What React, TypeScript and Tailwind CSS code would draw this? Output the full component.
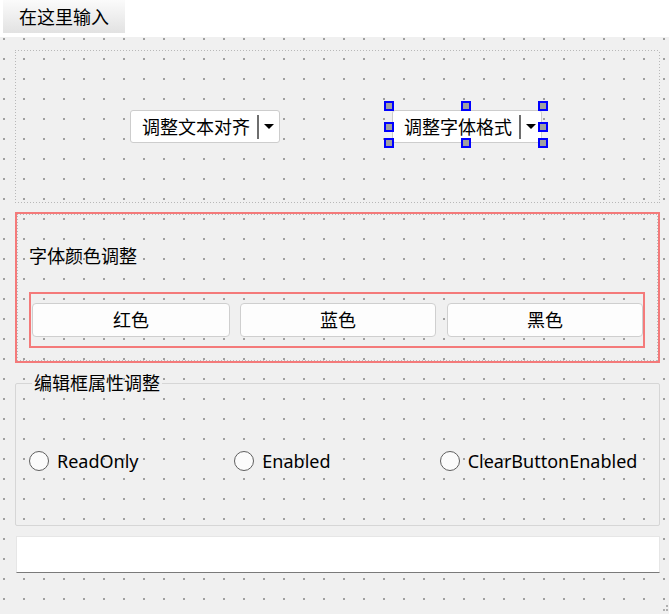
import React from "react";

const dotted =
  "[background-image:repeating-linear-gradient(90deg,#b8b8b8_0_1px,transparent_1px_3px),repeating-linear-gradient(90deg,#b8b8b8_0_1px,transparent_1px_3px),repeating-linear-gradient(0deg,#b8b8b8_0_1px,transparent_1px_3px),repeating-linear-gradient(0deg,#b8b8b8_0_1px,transparent_1px_3px)] [background-size:100%_1px,100%_1px,1px_100%,1px_100%] [background-position:0_0,0_100%,0_0,100%_0] bg-no-repeat";

function Combo({ label }: { label: string }) {
  return (
    <div className="h-[33px] w-[150px] bg-white border border-[#cdcdcd] rounded-[3px] flex items-center">
      <span className="pl-[11px] text-[18px] leading-[24px] whitespace-nowrap">{label}</span>
      <div className="ml-auto mr-[5px] flex items-center">
        <div className="w-[2px] h-[24px] bg-[#6e6e6e]" />
        <svg width="10" height="6" viewBox="0 0 10 6" className="ml-[5px]">
          <polygon points="0,0 10,0 5,5" fill="#000" />
        </svg>
      </div>
    </div>
  );
}

function Handle({ cls }: { cls: string }) {
  return <div className={`absolute w-[10px] h-[10px] bg-[#a0a0a0] border-2 border-[#0000ff] ${cls}`} />;
}

function Btn({ label, w }: { label: string; w: string }) {
  return (
    <div className={`${w} h-[34px] bg-[#fdfdfd] border border-[#cfcfcf] rounded-[4px] flex items-center justify-center text-[18px]`}>
      {label}
    </div>
  );
}

function Radio({ label }: { label: string }) {
  return (
    <div className="flex items-center gap-[8px] h-[24px]">
      <div className="w-[20px] h-[20px] rounded-full border border-[#5f5f5f] bg-[#fbfbfb]" />
      <span className="text-[18px] leading-[24px]">{label}</span>
    </div>
  );
}

export default function App() {
  return (
    <div className="w-[669px] h-[614px] bg-white overflow-hidden relative text-black font-['Noto_Sans','Noto_Sans_CJK_SC',sans-serif]">
      <div className="h-[37px]">
        <div className="ml-[3px] w-[122px] h-[33px] bg-gradient-to-b from-[#fbfbfb] to-[#e2e2e2] flex items-center pl-[16px] text-[18px] leading-[24px]">
          在这里输入
        </div>
      </div>
      <div className="h-[577px] bg-[#f0f0f0] [background-image:linear-gradient(to_bottom,transparent_2px,#f0f0f0_2px),linear-gradient(to_right,#a0a0a0_2px,transparent_2px)] [background-size:20px_20px] [background-position:3px_1px] pt-[13px] pl-[15px]">
        <div className="w-[645px] flex flex-col">
          {/* top layout */}
          <div className={`h-[153px] flex items-center ${dotted}`}>
            <div className="ml-[115px]">
              <Combo label="调整文本对齐" />
            </div>
            <div className="ml-[112px] relative">
              <Combo label="调整字体格式" />
              <Handle cls="left-[-8px] top-[-9px]" />
              <Handle cls="left-[69px] top-[-9px]" />
              <Handle cls="left-[146px] top-[-9px]" />
              <Handle cls="left-[-8px] top-[12px]" />
              <Handle cls="left-[146px] top-[12px]" />
              <Handle cls="left-[-8px] top-[28px]" />
              <Handle cls="left-[69px] top-[28px]" />
              <Handle cls="left-[146px] top-[28px]" />
            </div>
          </div>

          {/* red frame */}
          <div className="mt-[9px] h-[151px] border-2 border-[#f47a7a]">
            <div className={`h-full pl-[12px] ${dotted}`}>
              <div className="pt-[30px] text-[18px] leading-[24px]">字体颜色调整</div>
              <div className="mt-[24px] w-[616px] h-[56px] border-2 border-[#f47a7a] pt-[9px] pl-[1px] flex gap-[10px]">
                <Btn label="红色" w="w-[198px]" />
                <Btn label="蓝色" w="w-[196px]" />
                <div className="ml-[1px]">
                  <Btn label="黑色" w="w-[196px]" />
                </div>
              </div>
            </div>
          </div>

          {/* group box */}
          <fieldset className="mt-[8px] h-[155px] border border-[#d6d6d6] rounded-[2px] pl-[13px] m-0">
            <legend className="ml-[3px] px-[2px] text-[18px] leading-[24px]">编辑框属性调整</legend>
            <div className="pt-[54px] w-[616px] grid grid-cols-3">
              <Radio label="ReadOnly" />
              <Radio label="Enabled" />
              <Radio label="ClearButtonEnabled" />
            </div>
          </fieldset>

          {/* line edit */}
          <div className="mt-[10px] ml-[1px] w-[644px] h-[37px] bg-white border border-[#e6e6e6] border-b-[#7a7a7a]" />
        </div>
      </div>
      <svg className="absolute right-0 bottom-0" width="6" height="10" viewBox="0 0 6 10">
        <rect x="3" y="1" width="2" height="2" fill="#b0b0b0" />
        <rect x="0" y="5" width="2" height="2" fill="#b0b0b0" />
        <rect x="3" y="5" width="2" height="2" fill="#b0b0b0" />
      </svg>
    </div>
  );
}
